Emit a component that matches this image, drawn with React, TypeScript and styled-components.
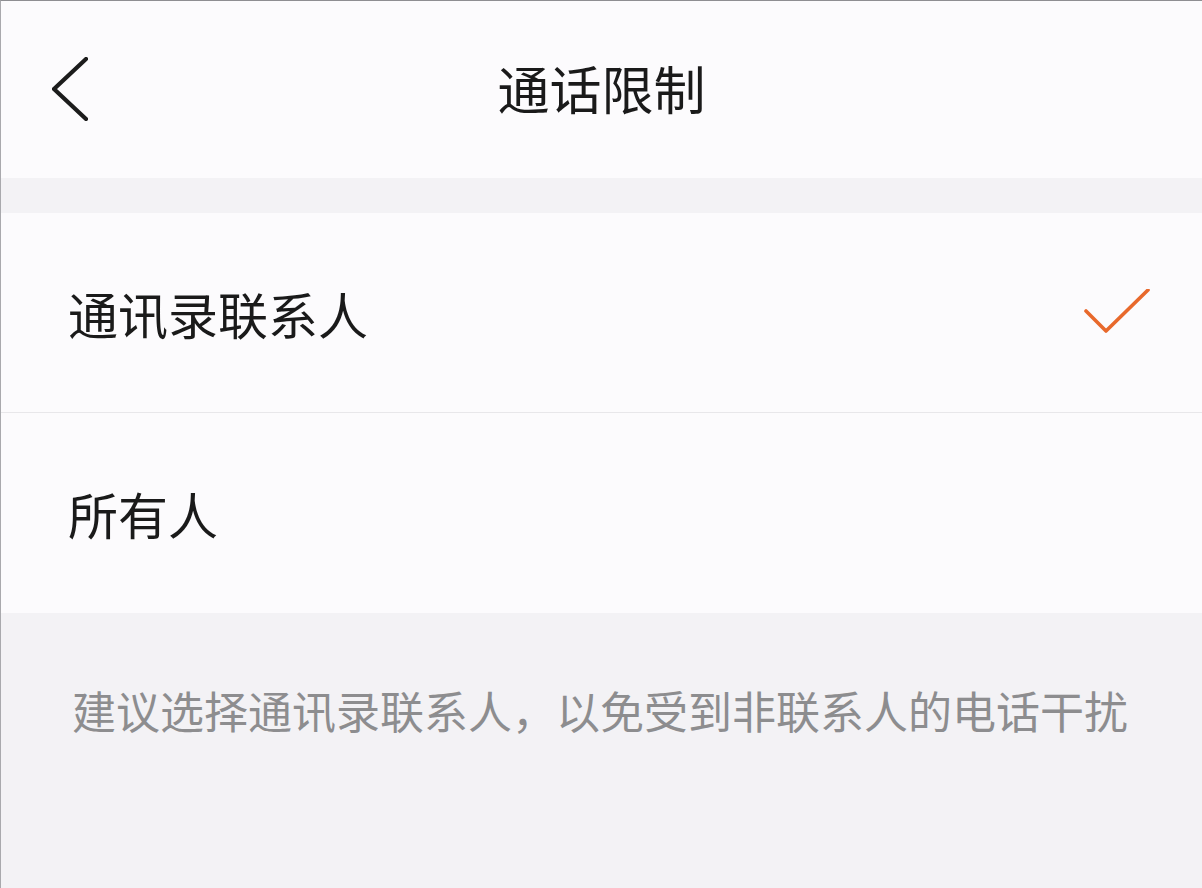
import styled, { createGlobalStyle } from "styled-components";

const GlobalStyle = createGlobalStyle`
  html, body {
    margin: 0;
    padding: 0;
    background: #f3f2f5;
  }
  body {
    font-family: "Noto Sans CJK SC", "Noto Sans", sans-serif;
  }
`;

const Page = styled.div`
  width: 1202px;
  height: 888px;
  box-sizing: border-box;
  border-top: 1px solid #8e8e92;
  border-left: 1px solid #a9a9ad;
  background: #f3f2f5;
  display: flex;
  flex-direction: column;
  overflow: hidden;
`;

const Header = styled.header`
  position: relative;
  height: 177px;
  flex-shrink: 0;
  background: #fcfbfd;
  display: flex;
  align-items: center;
  justify-content: center;
`;

const BackButton = styled.div`
  position: absolute;
  left: 51px;
  top: 56px;
  width: 36px;
  height: 64px;
  cursor: pointer;
`;

const Title = styled.h1`
  margin: 0;
  font-size: 52px;
  font-weight: 400;
  line-height: 1;
  color: #1a1a1a;
  padding-bottom: 3px;
`;

const Spacer = styled.div`
  height: 35px;
  flex-shrink: 0;
  background: #f3f2f5;
`;

const List = styled.div`
  background: #fcfbfd;
  display: flex;
  flex-direction: column;
`;

const Row = styled.div<{ divider?: boolean; h: number }>`
  height: ${(p) => p.h}px;
  box-sizing: border-box;
  padding: 0 50px 0 67px;
  display: flex;
  align-items: center;
  justify-content: space-between;
  border-bottom: ${(p) => (p.divider ? "1px solid #e8e7ea" : "none")};
  cursor: pointer;
`;

const RowLabel = styled.span`
  font-size: 50px;
  line-height: 1;
  color: #1a1a1a;
`;

const CheckWrap = styled.div`
  display: flex;
  padding-top: 3px;
`;

const Footer = styled.div`
  flex: 1;
  background: #f3f2f5;
  padding: 75px 0 0 71px;
`;

const Hint = styled.p`
  margin: 0;
  font-size: 44px;
  line-height: 1;
  color: #8d8d8f;
`;

function Chevron() {
  return (
    <svg width="36" height="64" viewBox="0 0 36 64" fill="none">
      <path
        d="M34 2 L2 32 L34 62"
        stroke="#1c1c1c"
        strokeWidth="4.2"
        strokeLinecap="round"
        strokeLinejoin="miter"
      />
    </svg>
  );
}

function Check() {
  return (
    <svg width="70" height="50" viewBox="0 0 70 50" fill="none">
      <path
        d="M4 22 L24 42 L66 1"
        stroke="#e8692c"
        strokeWidth="3.6"
        strokeLinecap="round"
        strokeLinejoin="round"
      />
    </svg>
  );
}

export default function App() {
  return (
    <>
      <GlobalStyle />
      <Page>
        <Header>
          <BackButton>
            <Chevron />
          </BackButton>
          <Title>通话限制</Title>
        </Header>
        <Spacer />
        <List>
          <Row h={200} divider>
            <RowLabel>通讯录联系人</RowLabel>
            <CheckWrap>
              <Check />
            </CheckWrap>
          </Row>
          <Row h={200}>
            <RowLabel>所有人</RowLabel>
          </Row>
        </List>
        <Footer>
          <Hint>建议选择通讯录联系人，以免受到非联系人的电话干扰</Hint>
        </Footer>
      </Page>
    </>
  );
}
